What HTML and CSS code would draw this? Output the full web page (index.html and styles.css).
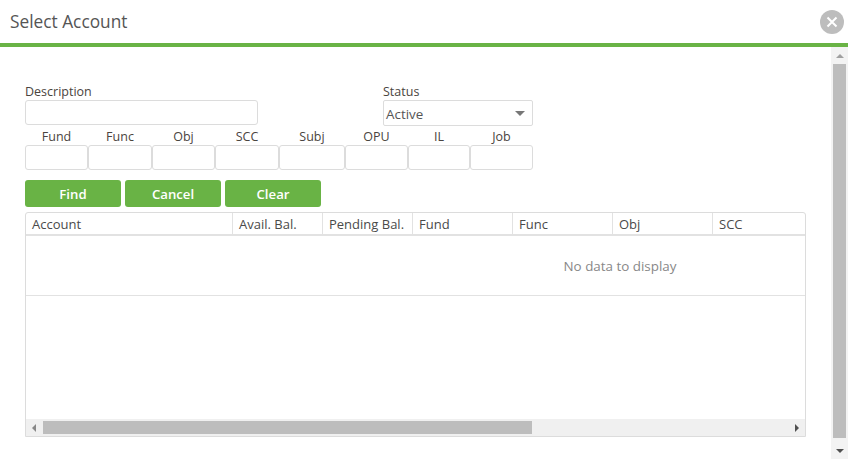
FILE: index.html
```html
<!DOCTYPE html>
<html lang="en">
<head>
<meta charset="UTF-8">
<title>Select Account</title>
<link rel="stylesheet" href="styles.css">
</head>
<body>
<div class="dialog">
  <div class="dialog-header">
    <div class="dialog-title">Select Account</div>
    <div class="close-btn">
      <svg width="12" height="12" viewBox="0 0 12 12"><path d="M1.5 1.5 L10.5 10.5 M10.5 1.5 L1.5 10.5" stroke="#fff" stroke-width="2" fill="none"/></svg>
    </div>
  </div>
  <div class="dialog-body">
    <div class="content">
      <div class="top-row">
        <div class="field-desc">
          <label>Description</label>
          <input class="text-input" type="text">
        </div>
        <div class="field-status">
          <label>Status</label>
          <div class="select-box"><span class="select-value">Active</span><span class="select-arrow"></span></div>
        </div>
      </div>
      <div class="code-fields">
        <label>Fund</label>
        <label>Func</label>
        <label>Obj</label>
        <label>SCC</label>
        <label>Subj</label>
        <label>OPU</label>
        <label>IL</label>
        <label>Job</label>
        <input class="text-input" type="text">
        <input class="text-input" type="text">
        <input class="text-input" type="text">
        <input class="text-input" type="text">
        <input class="text-input" type="text">
        <input class="text-input" type="text">
        <input class="text-input" type="text">
        <input class="text-input" type="text">
      </div>
      <div class="buttons">
        <button>Find</button>
        <button>Cancel</button>
        <button>Clear</button>
      </div>
      <div class="grid">
        <div class="grid-head">
          <div class="col col-account">Account</div>
          <div class="col col-bal">Avail. Bal.</div>
          <div class="col col-bal">Pending Bal.</div>
          <div class="col col-code">Fund</div>
          <div class="col col-code">Func</div>
          <div class="col col-code">Obj</div>
          <div class="col col-last">SCC</div>
        </div>
        <div class="no-data">No data to display</div>
        <div class="grid-space"></div>
        <div class="hscroll">
          <span class="arrow arrow-left"></span>
          <div class="hscroll-track"><div class="hscroll-thumb"></div></div>
          <span class="arrow arrow-right"></span>
        </div>
      </div>
    </div>
    <div class="vscroll">
      <span class="arrow arrow-up"></span>
      <div class="vscroll-thumb"></div>
      <span class="arrow arrow-down"></span>
    </div>
  </div>
</div>
</body>
</html>
```

FILE: styles.css
```css
html, body {
  margin: 0;
  height: 100%;
  background-color: #fff;
  overflow: hidden;
}
body {
  font-family: "Open Sans", "Noto Sans", sans-serif;
  font-size: 12.5px;
  color: #444;
}
.dialog {
  width: 848px;
  height: 459px;
  display: flex;
  flex-direction: column;
}
.dialog-header {
  height: 43px;
  flex: none;
  display: flex;
  align-items: center;
  justify-content: space-between;
  padding: 0 4px 0 10px;
  border-bottom: 4px solid #69b345;
}
.dialog-title {
  font-size: 17.3px;
  color: #555;
}
.close-btn {
  width: 24px;
  height: 24px;
  border-radius: 50%;
  background-color: #bdbdbd;
  display: flex;
  justify-content: center;
  align-items: center;
}
.dialog-body {
  flex: 1;
  display: flex;
  min-height: 0;
}
.content {
  flex: 1;
  padding: 37px 25px 0 25px;
}
.top-row {
  display: flex;
}
.field-desc {
  width: 358px;
  display: flex;
  flex-direction: column;
}
.field-desc .text-input {
  width: 233px;
  height: 25px;
}
.field-status {
  width: 150px;
  display: flex;
  flex-direction: column;
}
label {
  display: block;
  height: 16px;
  line-height: 16px;
  color: #4a4440;
}
.text-input {
  box-sizing: border-box;
  margin: 0;
  border: 1px solid #dcdcdc;
  border-radius: 3px;
  background-color: #fff;
  height: 25px;
  width: 100%;
  outline: none;
}
.select-box {
  box-sizing: border-box;
  height: 26px;
  border: 1px solid #dcdcdc;
  border-radius: 2px;
  padding: 0 2px;
  font-size: 13.4px;
  color: #555;
  display: flex;
  justify-content: space-between;
  align-items: center;
}
.select-value {
  padding-top: 2px;
}
.select-arrow {
  width: 0;
  height: 0;
  margin-right: 5px;
  border-left: 5px solid transparent;
  border-right: 5px solid transparent;
  border-top: 5px solid #777;
}
.code-fields {
  display: grid;
  grid-template-columns: 63px 64px 63px 64px 66px 63px 62px 63px;
  width: 508px;
  margin-top: 2px;
}
.code-fields label {
  text-align: center;
  height: 17px;
  line-height: 18px;
}
.buttons {
  display: flex;
  gap: 4px;
  margin-top: 10px;
}
button {
  width: 96px;
  height: 27px;
  padding: 0;
  border: none;
  border-radius: 3px;
  background-color: #69b345;
  color: #fff;
  font-family: inherit;
  font-size: 13.2px;
  font-weight: 600;
}
.grid {
  box-sizing: border-box;
  margin-top: 5px;
  width: 781px;
  height: 225px;
  border: 1px solid #dcdcdc;
  border-radius: 3px 3px 0 0;
  display: flex;
  flex-direction: column;
  font-size: 13px;
}
.grid-head {
  display: flex;
  height: 23px;
  flex: none;
  box-sizing: border-box;
  border-bottom: 2px solid #e2e2e2;
  color: #4a4a4a;
}
.col {
  box-sizing: border-box;
  padding-left: 6px;
  line-height: 23px;
  border-right: 1px solid #e2e2e2;
  white-space: nowrap;
}
.col-account { width: 207px; }
.col-bal { width: 90px; }
.col-code { width: 100px; }
.col-last { flex: 1; border-right: none; }
.no-data {
  height: 60px;
  flex: none;
  box-sizing: border-box;
  border-bottom: 1px solid #e2e2e2;
  display: flex;
  align-items: center;
  justify-content: center;
  padding: 1px 0 0 409px;
  font-size: 13.4px;
  color: #888;
}
.grid-space {
  flex: 1;
}
.hscroll {
  height: 17px;
  flex: none;
  background-color: #f0f0f0;
  display: flex;
  align-items: center;
}
.hscroll .arrow-left { margin: 0 0 0 6px; }
.hscroll-track {
  margin-left: 7px;
  flex: 1;
  height: 13px;
}
.hscroll-thumb {
  width: 489px;
  height: 13px;
  background-color: #bdbdbd;
}
.hscroll .arrow-right { margin-right: 6px; }
.arrow {
  width: 0;
  height: 0;
  flex: none;
  display: block;
}
.arrow-left {
  border-top: 4px solid transparent;
  border-bottom: 4px solid transparent;
  border-right: 4px solid #888;
}
.arrow-right {
  border-top: 4px solid transparent;
  border-bottom: 4px solid transparent;
  border-left: 4px solid #505050;
}
.arrow-up {
  border-left: 4px solid transparent;
  border-right: 4px solid transparent;
  border-bottom: 4px solid #a0a0a0;
  margin: 7px 0 6px;
}
.arrow-down {
  border-left: 4px solid transparent;
  border-right: 4px solid transparent;
  border-top: 4px solid #505050;
  margin-top: 11px;
}
.vscroll {
  width: 17px;
  flex: none;
  background-color: #f3f3f3;
  display: flex;
  flex-direction: column;
  align-items: center;
}
.vscroll-thumb {
  width: 13px;
  height: 374px;
  background-color: #bdbdbd;
}
```
